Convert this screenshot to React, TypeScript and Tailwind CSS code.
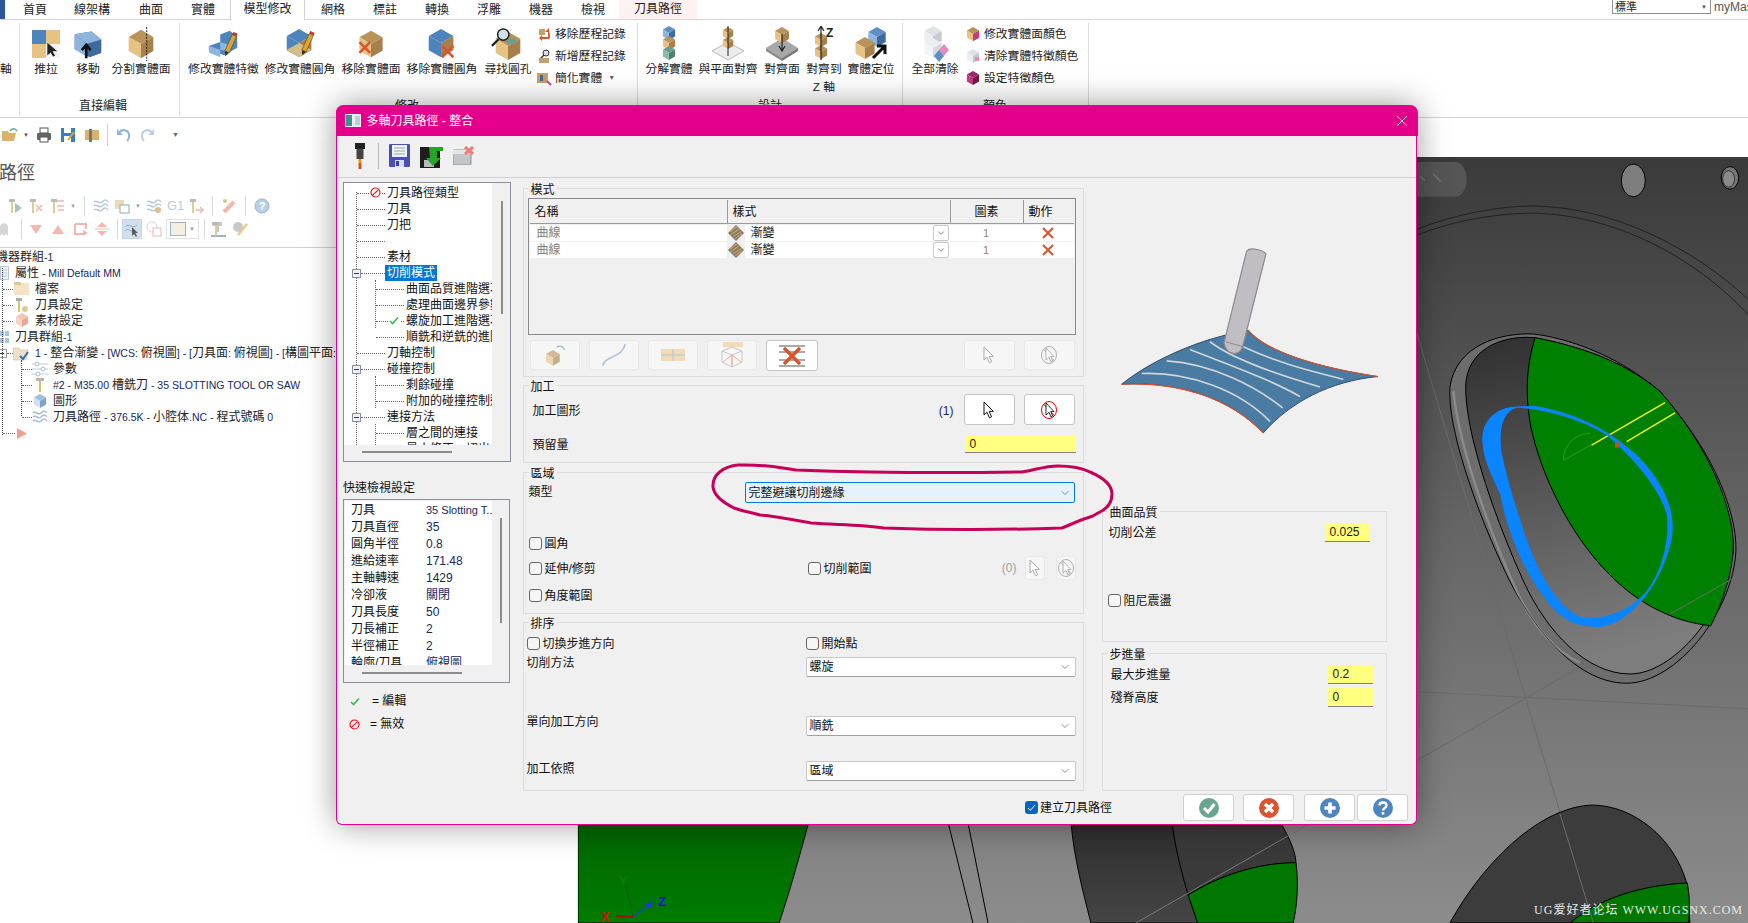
import { ChevronDown } from 'lucide-react';
import type { ReactNode } from 'react';

// small isometric cube used by most of the ribbon icons
function Cube({ x, y, s, t = '#b8935a', l = '#e4c385', r = '#a67f4a' }: { x: number; y: number; s: number; t?: string; l?: string; r?: string }) {
  const w = s * 0.87;
  const h = s / 2;
  return (
    <g>
      <polygon points={`${x},${y - s} ${x + w},${y - h} ${x},${y} ${x - w},${y - h}`} fill={t} />
      <polygon points={`${x - w},${y - h} ${x},${y} ${x},${y + s} ${x - w},${y + h}`} fill={l} />
      <polygon points={`${x + w},${y - h} ${x},${y} ${x},${y + s} ${x + w},${y + h}`} fill={r} />
    </g>
  );
}

const BLUE = { t: '#5d8fc4', l: '#8fb5de', r: '#3e6a9e' };
const TEAL = { t: '#6d9f8d', l: '#8dbaa8', r: '#4f8170' };

function Pencil({ x = 24, y = 14 }: { x?: number; y?: number }) {
  return (
    <g transform={`translate(${x} ${y}) rotate(24)`}>
      <rect x="-2.5" y="0" width="5" height="19" fill="#d9a52e" stroke="#5a4a20" strokeWidth="0.6" />
      <rect x="-2.5" y="-3" width="5" height="3" fill="#c0392b" />
      <polygon points="-2.5,19 2.5,19 0,24" fill="#333" />
    </g>
  );
}

function RedX({ x, y, s = 6 }: { x: number; y: number; s?: number }) {
  return <path d={`M${x - s} ${y - s}L${x + s} ${y + s}M${x + s} ${y - s}L${x - s} ${y + s}`} stroke="#d9532c" strokeWidth="2.8" />;
}

function Ic({ size = 36, children }: { size?: number; children: ReactNode }) {
  return (
    <svg width={size} height={size} viewBox="0 0 36 36" className="shrink-0">
      {children}
    </svg>
  );
}

const Cursor = ({ c = '#111', f = '#fff' }: { c?: string; f?: string }) => (
  <svg width="12" height="18" viewBox="0 0 12 18">
    <path d="M1 1V14L4 11.2L6.4 16.8L8.6 15.8L6.2 10.4H10.4Z" fill={f} stroke={c} strokeWidth="1" />
  </svg>
);

const NoCursor = ({ c = '#111', ring = '#e00' }: { c?: string; ring?: string }) => (
  <svg width="18" height="20" viewBox="0 0 18 20">
    <ellipse cx="9" cy="10" rx="7.5" ry="8.5" fill="none" stroke={ring} strokeWidth="1" />
    <path d="M3.5 4L14.5 16" stroke={ring} strokeWidth="1" />
    <path d="M6 3V15L9 12.4L11 17L12.6 16L10.8 11.6H14Z" fill="#fff" stroke={c} strokeWidth="0.9" />
  </svg>
);

function Ribbon({ w, label, icon }: { w: string; label: string; icon: ReactNode }) {
  return (
    <div className={`${w} flex flex-col items-center`}>
      <div className="h-[32px] flex items-center justify-center">{icon}</div>
      <span className="whitespace-nowrap text-[11.8px] mt-px">{label}</span>
    </div>
  );
}

function SmallItem({ icon, text, arrow }: { icon: ReactNode; text: string; arrow?: boolean }) {
  return (
    <div className="flex items-center h-[22px] gap-[2px] whitespace-nowrap">
      <span className="w-[18px] flex justify-center">{icon}</span>
      <span className="text-[11.8px]">{text}</span>
      {arrow && <span className="ml-1 text-[7px] text-[#666]">▼</span>}
    </div>
  );
}

function Tile({ className = '', children }: { className?: string; children: ReactNode }) {
  return (
    <svg width="16" height="16" viewBox="0 0 16 16" className={`shrink-0 ${className}`}>
      {children}
    </svg>
  );
}

function Sep({ className = '' }: { className?: string }) {
  return <span className={`w-px h-[20px] bg-[#cfcfcf] mx-[3px] shrink-0 ${className}`} />;
}

function Tool({ color = '#d8c27a' }: { color?: string }) {
  return (
    <g>
      <rect x="2" y="1" width="6" height="3" fill="#aaa" />
      <rect x="4" y="4" width="2" height="11" fill={color} />
    </g>
  );
}

function Waves() {
  return <path d="M1 4C4 1 6 7 9 4S14 2 15 4M1 8C4 5 6 11 9 8S14 6 15 8M1 12C4 9 6 15 9 12S14 10 15 12" fill="none" stroke="#a9bdd2" strokeWidth="1.5" />;
}

function Check() {
  return (
    <svg width="10" height="9" viewBox="0 0 10 9">
      <path d="M1 5L3.6 7.6L9 1.4" fill="none" stroke="#3cb44a" strokeWidth="1.5" />
    </svg>
  );
}

function Invalid() {
  return (
    <svg width="11" height="11" viewBox="0 0 11 11" className="block">
      <circle cx="5.5" cy="5.5" r="4.5" fill="none" stroke="#e8141a" strokeWidth="1.2" />
      <path d="M2.4 8.4L8.6 2.6" stroke="#e8141a" strokeWidth="1.2" />
    </svg>
  );
}

function PlusBox() {
  return (
    <span className="w-[9px] h-[9px] border border-[#8a8f9a] bg-[#eef0f3] flex items-center justify-center shrink-0">
      <span className="w-[5px] h-px bg-[#2b3f73]" />
    </span>
  );
}

function Dots({ w }: { w: string }) {
  return <span className={`${w} border-t border-dotted border-[#666] shrink-0`} />;
}

// latin runs in the tree are set smaller than the CJK around them
function L({ children }: { children: ReactNode }) {
  return <span className="text-[10.5px] text-[#14285c]">{children}</span>;
}

function Group({ title, className, children }: { title: string; className: string; children: ReactNode }) {
  return (
    <div className={`relative border border-[#dcdcdc] ${className}`}>
      <span className="absolute -top-[7px] left-[5px] bg-[#f0f0f0] px-[2px] leading-4">{title}</span>
      {children}
    </div>
  );
}

function Box({ label, className = '' }: { label: string; className?: string }) {
  return (
    <label className={`flex items-center gap-[3px] whitespace-nowrap h-5 ${className}`}>
      <span className="w-[13px] h-[13px] rounded-[3px] border border-[#666] bg-[#f5f5f5] shrink-0" />
      <span className="pt-px">{label}</span>
    </label>
  );
}

function Sel({ text, className = '' }: { text: string; className?: string }) {
  return (
    <div className={`h-5 flex items-center justify-between pl-[3px] pr-[4px] bg-white border border-[#c8c8c8] border-b-[#a0a0a0] rounded-[2px] ${className}`}>
      <span>{text}</span>
      <ChevronDown size={12} strokeWidth={1.2} className="text-[#444]" />
    </div>
  );
}

function Yellow({ value, className }: { value: string; className: string }) {
  return <div className={`bg-[#ffff80] border-b border-[#808080] flex items-center pl-[5px] text-[#1a1a1a] ${className}`}>{value}</div>;
}

function PickBtn({ on, w = 'w-[51px] h-[31px]', children }: { on?: boolean; w?: string; children: ReactNode }) {
  return (
    <div className={`${w} flex items-center justify-center rounded-[3px] border ${on ? 'bg-white border-[#c4c4c4]' : 'bg-[#f6f6f6] border-[#e8e8e8]'}`}>
      {children}
    </div>
  );
}

function Round({ color, w, children }: { color: string; w: string; children: ReactNode }) {
  return (
    <div className={`${w} h-[27px] bg-white border border-[#cfcfcf] rounded-[3px] flex items-center justify-center`}>
      <svg width="20" height="20" viewBox="0 0 20 20">
        <circle cx="10" cy="10" r="10" fill={color} />
        {children}
      </svg>
    </div>
  );
}

function PatternRow() {
  return (
    <div className="grid grid-cols-[197px_223px_73px_50px] h-4 bg-white mb-px">
      <span className="pl-[7px] text-[#7d7d7d] leading-4">曲線</span>
      <div className="flex items-center">
        <svg width="18" height="16" viewBox="0 0 18 16" className="bg-[#efefef] shrink-0">
          <polygon points="9,0 17,8 9,16 1,8" fill="#7d7d7d" />
          <path d="M3 7C7 4 8 3 10 2M4 9.5C8 7 10 5 12 4M6 11.5C10 10 12 8 14 6.5M8 13.5C11 12 13 10 15 8.5" fill="none" stroke="#dba13f" strokeWidth="1.1" />
        </svg>
        <span className="ml-[6px] flex-1">漸變</span>
        <span className="w-[16px] h-4 border border-[#c8c8c8] rounded-[2px] flex items-center justify-center mr-px">
          <ChevronDown size={10} strokeWidth={1.2} />
        </span>
      </div>
      <span className="text-center text-[#a08060] text-[11px] leading-4">1</span>
      <svg width="50" height="16" viewBox="0 0 50 16">
        <path d="M20 3L30 13M30 3L20 13" stroke="#d9532c" strokeWidth="2" />
      </svg>
    </div>
  );
}

const TREE = [
  { lv: 1, t: '刀具路徑類型', icon: 'no' },
  { lv: 1, t: '刀具' },
  { lv: 1, t: '刀把' },
  { lv: 1, t: '' },
  { lv: 1, t: '素材' },
  { lv: 1, t: '切削模式', box: true, sel: true },
  { lv: 2, t: '曲面品質進階選項' },
  { lv: 2, t: '處理曲面邊界參數' },
  { lv: 2, t: '螺旋加工進階選項', icon: 'ok' },
  { lv: 2, t: '順銑和逆銑的進階' },
  { lv: 1, t: '刀軸控制' },
  { lv: 1, t: '碰撞控制', box: true },
  { lv: 2, t: '剩餘碰撞' },
  { lv: 2, t: '附加的碰撞控制選' },
  { lv: 1, t: '連接方法', box: true },
  { lv: 2, t: '層之間的連接' },
  { lv: 2, t: '最小修正一切出' },
];

const QUICK = [
  ['刀具直徑', '35'],
  ['圓角半徑', '0.8'],
  ['進給速率', '171.48'],
  ['主軸轉速', '1429'],
  ['冷卻液', '關閉'],
  ['刀具長度', '50'],
  ['刀長補正', '2'],
  ['半徑補正', '2'],
  ['輪廓/刀具', '俯視圖'],
];

function MultiAxisDialog() {
  return (
    <div className="absolute left-[336px] top-[105px] w-[1081px] h-[720px] bg-[#f0f0f0] border-[1.5px] border-t-0 border-[#e4008a] rounded-t-lg rounded-b-md shadow-[0_0_32px_rgba(0,0,0,0.4)] text-[#111]">
      <div className="h-[31px] bg-[#e4008a] rounded-t-lg flex items-center text-white pl-[9px] -mx-[1.5px]">
        <svg width="16" height="13" viewBox="0 0 16 13" className="mr-[6px]">
          <rect width="16" height="13" fill="#e8eef0" />
          <rect x="1" y="1" width="6" height="11" fill="#3f8f8a" />
          <rect x="10" y="2" width="5" height="9" fill="#bcd" />
        </svg>
        <span>多軸刀具路徑 - 整合</span>
        <svg width="12" height="12" viewBox="0 0 12 12" className="ml-auto mr-[10px]">
          <path d="M1 1L11 11M11 1L1 11" stroke="#fff" strokeWidth="1" />
        </svg>
      </div>

      <div className="h-[42px] pb-[2px] border-b border-[#d0d0d0] flex items-center pl-[17px]">
        <svg width="12" height="26" viewBox="0 0 12 26">
          <rect x="1" y="0" width="10" height="6" fill="#222" />
          <rect x="2.5" y="6" width="7" height="10" fill="#444" />
          <rect x="4.5" y="16" width="3" height="4" fill="#e89a1c" />
          <rect x="4.5" y="20" width="3" height="6" fill="#d9531a" />
        </svg>
        <span className="w-px h-[26px] bg-[#b8b8b8] ml-[12px]" />
        <svg width="21" height="23" viewBox="0 0 21 23" className="ml-[10px]">
          <rect width="21" height="23" rx="1" fill="#4a4fb5" />
          <rect x="3" y="1" width="15" height="12" fill="#f0f2f8" />
          <path d="M5 4H16M5 7H16M5 10H16" stroke="#9aa" strokeWidth="1" />
          <rect x="6" y="16" width="9" height="7" fill="#d8dcf0" />
          <rect x="7" y="17" width="3" height="5" fill="#3a3f9a" />
        </svg>
        <svg width="23" height="24" viewBox="0 0 23 24" className="ml-[10px]">
          <rect y="3" width="20" height="21" fill="#1d1d1d" />
          <rect x="4" y="16" width="10" height="7" fill="#bbb" />
          <path d="M9 3H23V7H17V14H21L13 22L6 14H10Z" fill="#2aa32a" />
        </svg>
        <svg width="21" height="19" viewBox="0 0 21 19" className="ml-[10px]">
          <rect y="4" width="18" height="15" rx="1" fill="#c3c6c9" stroke="#8f8f8f" />
          <rect y="4" width="18" height="4" fill="#e6e6e6" />
          <path d="M12 1L20 8M20 1L12 8" stroke="#ef7b7b" strokeWidth="3" />
        </svg>
      </div>

      <div className="flex">
        {/* left column */}
        <div className="w-[174px] pl-[6px] shrink-0">
          <div className="relative mt-[4px] w-[168px] h-[280px] bg-white border border-[#8a8f9a] overflow-hidden">
            <span className="absolute left-[12px] top-[9px] h-[255px] border-l border-dotted border-[#666]" />
            <span className="absolute left-[31px] top-[97px] h-[48px] border-l border-dotted border-[#666]" />
            <span className="absolute left-[31px] top-[193px] h-[32px] border-l border-dotted border-[#666]" />
            <span className="absolute left-[31px] top-[241px] h-[25px] border-l border-dotted border-[#666]" />
            <div className="w-[149px] h-[263px] pt-[2px] overflow-hidden">
              {TREE.map((r, i) => (
                <div key={i} className="relative h-4 flex items-center whitespace-nowrap">
                  {r.lv === 1 ? (
                    r.box ? (
                      <span className="pl-[8px] flex items-center">
                        <PlusBox />
                        <Dots w="w-[24px]" />
                      </span>
                    ) : (
                      <span className="pl-[13px] flex items-center">
                        <Dots w="w-[28px]" />
                      </span>
                    )
                  ) : (
                    <span className="pl-[32px] flex items-center">
                      <Dots w="w-[28px]" />
                    </span>
                  )}
                  {r.icon === 'no' && (
                    <span className="absolute left-[25px] top-[2px] bg-white px-px">
                      <Invalid />
                    </span>
                  )}
                  {r.icon === 'ok' && (
                    <span className="absolute left-[44px] top-[3px] bg-white pl-[1px] pr-[2px]">
                      <Check />
                    </span>
                  )}
                  <span className={r.sel ? 'bg-[#0078d7] text-white px-[2px] h-4 leading-4' : 'pl-[2px] leading-4'}>{r.t}</span>
                </div>
              ))}
            </div>
            <span className="absolute right-0 top-0 bottom-0 w-[18px] bg-[#f0f0f0]" />
            <span className="absolute bottom-0 left-0 right-0 h-[16px] bg-[#f0f0f0]" />
            <span className="absolute left-[157px] top-[18px] h-[113px] w-[2px] bg-[#8c8c8c]" />
            <span className="absolute left-[18px] bottom-[8px] w-[90px] h-[2px] bg-[#8c8c8c]" />
          </div>

          <div className="mt-[18px] h-4 leading-4">快速檢視設定</div>
          <div className="relative mt-[3px] w-[167px] h-[184px] bg-[#f0f0f0] border border-[#8a8f9a] overflow-hidden">
            <div className="ml-px mt-px w-[147px] h-[164px] bg-white overflow-hidden">
              <div className="flex h-[17px] items-center whitespace-nowrap">
                <span className="w-[81px] pl-[6px] shrink-0">刀具</span>
                <span className="text-[#14285c] text-[11px]">35 Slotting T..</span>
              </div>
              {QUICK.map(([k, v]) => (
                <div key={k} className="flex h-[17px] items-center whitespace-nowrap">
                  <span className="w-[81px] pl-[6px] shrink-0">{k}</span>
                  <span className="text-[#14285c]">{v}</span>
                </div>
              ))}
            </div>
            <span className="absolute left-[156px] top-[18px] h-[105px] w-[2px] bg-[#8c8c8c]" />
            <span className="absolute left-[18px] bottom-[8px] w-[100px] h-[2px] bg-[#8c8c8c]" />
          </div>
          <div className="mt-[10px] pl-[7px] flex items-center gap-[12px] h-4">
            <Check />
            <span>= 編輯</span>
          </div>
          <div className="mt-[7px] pl-[6px] flex items-center gap-[10px] h-4">
            <Invalid />
            <span>= 無效</span>
          </div>
        </div>

        {/* middle + right */}
        <div className="flex-1 pl-[11.5px]">
          <div className="flex">
            <div className="w-[561px] shrink-0 pt-[10px]">
              <Group title="模式" className="h-[189px] pt-[9px]">
                <div className="ml-[4px] w-[548px] h-[137px] border border-[#8a8a8a] p-px">
                  <div className="grid grid-cols-[197px_223px_73px_50px] h-[24px] border-b border-[#9a9a9a] mb-px">
                    <span className="pl-[5px] leading-[24px]">名稱</span>
                    <span className="pl-[5px] leading-[24px] border-l border-[#9a9a9a]">樣式</span>
                    <span className="text-center leading-[24px] border-l border-[#9a9a9a]">圖素</span>
                    <span className="pl-[5px] leading-[24px] border-l border-[#9a9a9a]">動作</span>
                  </div>
                  <PatternRow />
                  <PatternRow />
                </div>
                <div className="flex mt-[5px] pl-[6px] pr-[8px]">
                  <div className="flex gap-[9px]">
                    <PickBtn w="w-[50px] h-[30px]">
                      <svg width="26" height="24" viewBox="0 0 36 32" opacity="0.6">
                        <Cube x={15} y={20} s={11} />
                        <path d="M20 5C26 2 30 5 31 9" fill="none" stroke="#6d9f8d" strokeWidth="2" />
                      </svg>
                    </PickBtn>
                    <PickBtn w="w-[50px] h-[30px]">
                      <svg width="26" height="26" viewBox="0 0 26 26">
                        <path d="M2 24C2 14 22 16 24 2" fill="none" stroke="#a9c4de" strokeWidth="1.6" />
                      </svg>
                    </PickBtn>
                    <PickBtn w="w-[50px] h-[30px]">
                      <svg width="24" height="14" viewBox="0 0 24 14">
                        <rect width="24" height="12" y="1" fill="#f3dcb4" />
                        <path d="M0 7H24M12 1V13" stroke="#a9c4de" strokeWidth="1" />
                      </svg>
                    </PickBtn>
                    <PickBtn w="w-[50px] h-[30px]">
                      <svg width="24" height="26" viewBox="0 0 24 26">
                        <rect x="3" y="0" width="20" height="5" fill="#f3dcb4" />
                        <path d="M2 9L12 5L22 9L22 20L12 25L2 20ZM2 9L12 13L22 9M12 13V25" fill="none" stroke="#c8c8c8" strokeWidth="1" />
                        <path d="M12 13L12 24M12 13L3 20M12 13L21 20" stroke="#f0a79a" strokeWidth="1" />
                      </svg>
                    </PickBtn>
                    <PickBtn on w="w-[52px] h-[31px]">
                      <svg width="26" height="24" viewBox="0 0 26 24">
                        <path d="M0 2H26M0 8H26M0 16H26M0 22H26" stroke="#555" strokeWidth="1" />
                        <path d="M5 4L21 20M21 4L5 20" stroke="#d9532c" strokeWidth="3.4" />
                      </svg>
                    </PickBtn>
                  </div>
                  <div className="ml-auto flex gap-[9px]">
                    <PickBtn w="w-[51px] h-[30px]">
                      <Cursor c="#a8a8a8" />
                    </PickBtn>
                    <PickBtn w="w-[51px] h-[30px]">
                      <NoCursor c="#a8a8a8" ring="#b0b0b0" />
                    </PickBtn>
                  </div>
                </div>
              </Group>

              <Group title="加工" className="h-[78px] mt-[8px] pt-[8px]">
                <div className="flex items-center h-[31px] pl-[9px] pr-[8px]">
                  <span className="pt-[3px]">加工圖形</span>
                  <span className="ml-auto mr-[10px] pt-[3px] text-[#14285c]">(1)</span>
                  <div className="flex gap-[9px]">
                    <PickBtn on>
                      <Cursor />
                    </PickBtn>
                    <PickBtn on>
                      <NoCursor />
                    </PickBtn>
                  </div>
                </div>
                <div className="flex items-center mt-[10px] h-[18px] pl-[9px] pr-[7px]">
                  <span className="pt-px">預留量</span>
                  <Yellow value="0" className="ml-auto w-[111px] h-[18px]" />
                </div>
              </Group>

              <Group title="區域" className="h-[142px] mt-[9px] pt-[9px]">
                <div className="flex h-[21px]">
                  <span className="w-[221px] pl-[5px] leading-5">類型</span>
                  <div className="w-[330px] h-[21px] flex items-center justify-between pl-[3px] pr-[3px] bg-[#e5f1fb] border border-[#0078d7] rounded-[2px]">
                    <span>完整避讓切削邊緣</span>
                    <ChevronDown size={12} strokeWidth={1.2} className="text-[#444]" />
                  </div>
                </div>
                <Box label="圓角" className="mt-[30px] pl-[5px]" />
                <div className="flex items-center mt-[5px] h-5">
                  <Box label="延伸/修剪" className="w-[284px] pl-[5px]" />
                  <Box label="切削範圍" />
                  <span className="ml-auto text-[#a0a0a0] mr-[8px]">(0)</span>
                  <div className="flex gap-[11px] pr-[7px]">
                    <PickBtn w="w-[20px] h-[24px]">
                      <Cursor c="#a8a8a8" />
                    </PickBtn>
                    <PickBtn w="w-[20px] h-[24px]">
                      <NoCursor c="#a8a8a8" ring="#b0b0b0" />
                    </PickBtn>
                  </div>
                </div>
                <Box label="角度範圍" className="mt-[7px] pl-[5px]" />
              </Group>

              <Group title="排序" className="h-[169px] mt-[8px] pt-[10px]">
                <div className="flex">
                  <Box label="切換步進方向" className="w-[282px] pl-[3px]" />
                  <Box label="開始點" />
                </div>
                <div className="flex mt-[4px]">
                  <span className="w-[282px] pl-[3px] -mt-[2px] leading-4">切削方法</span>
                  <Sel text="螺旋" className="w-[270px]" />
                </div>
                <div className="flex mt-[39px]">
                  <span className="w-[282px] pl-[3px] -mt-[2px] leading-4">單向加工方向</span>
                  <Sel text="順銑" className="w-[270px]" />
                </div>
                <div className="flex mt-[25px]">
                  <span className="w-[282px] pl-[3px] leading-4">加工依照</span>
                  <Sel text="區域" className="w-[270px]" />
                </div>
              </Group>
            </div>

            <div className="w-[285px] ml-[18px] shrink-0">
              <svg width="285" height="333" viewBox="1102 178 285 333" className="block">
                <g transform="translate(1080 230) scale(0.3333 0.3827)" fill="none" strokeWidth="2">
                  <path d="M125 403C200 350 320 300 435 275L505 262C560 320 720 360 893 383C750 395 630 450 550 530C450 440 300 395 125 403Z" fill="#4a7ca3" stroke="#2f4a6b" vectorEffect="non-scaling-stroke" strokeWidth="1" />
                  <path d="M125 403C300 395 450 440 550 530M505 262C560 320 720 360 893 383" stroke="#d9502e" vectorEffect="non-scaling-stroke" strokeWidth="1.2" />
                  <path d="M185 375C330 370 480 420 570 500M260 342C400 350 530 410 608 465M330 312C440 350 570 390 660 435M390 292C470 345 620 385 720 410M490 305C600 350 700 370 790 390" stroke="#cfd5d8" vectorEffect="non-scaling-stroke" strokeWidth="1.6" />
                  <path d="M500 55C510 45 545 50 558 62L488 305C480 330 440 330 432 295Z" fill="#c0bec2" stroke="#8a8a8a" vectorEffect="non-scaling-stroke" strokeWidth="1.2" />
                  <path d="M438 292L488 305" stroke="#8a8a8a" vectorEffect="non-scaling-stroke" strokeWidth="1" />
                </g>
              </svg>
              <Group title="曲面品質" className="h-[131px] pt-[11px]">
                <div className="flex items-center h-[19px] pl-[6px] pr-[16px]">
                  <span>切削公差</span>
                  <Yellow value="0.025" className="ml-auto w-[45px] h-[19px]" />
                </div>
                <Box label="阻尼震盪" className="mt-[48px] pl-[5px]" />
              </Group>
              <Group title="步進量" className="h-[138px] mt-[11px] pt-[11px]">
                <div className="flex items-center h-[19px] pl-[8px] pr-[13px]">
                  <span>最大步進量</span>
                  <Yellow value="0.2" className="ml-auto w-[45px] h-[19px]" />
                </div>
                <div className="flex items-center h-[19px] mt-[4px] pl-[8px] pr-[13px]">
                  <span>殘脊高度</span>
                  <Yellow value="0" className="ml-auto w-[45px] h-[19px]" />
                </div>
              </Group>
            </div>
          </div>

          <div className="flex items-center justify-end mt-[3px] pr-[8px]">
            <span className="w-[13px] h-[13px] rounded-[3px] bg-[#0a63c2] flex items-center justify-center mr-[2px]">
              <svg width="9" height="8" viewBox="0 0 9 8">
                <path d="M1 4L3.4 6.4L8 1" fill="none" stroke="#fff" strokeWidth="1" />
              </svg>
            </span>
            <span className="mr-[71px] whitespace-nowrap">建立刀具路徑</span>
            <Round color="#6ba592" w="w-[51px]">
              <path d="M5 10L9 14L15.5 6" fill="none" stroke="#fff" strokeWidth="3" />
            </Round>
            <span className="w-[9px]" />
            <Round color="#d9552f" w="w-[51px]">
              <path d="M6 6L14 14M14 6L6 14" stroke="#fff" strokeWidth="3.4" />
            </Round>
            <span className="w-[10px]" />
            <Round color="#4f86bf" w="w-[51px]">
              <path d="M10 4.5V15.5M4.5 10H15.5" stroke="#fff" strokeWidth="3.6" />
            </Round>
            <span className="w-[2px]" />
            <Round color="#4f86bf" w="w-[51px]">
              <path d="M6.5 7.5C6.5 3.5 13.5 3.5 13.5 7.5C13.5 10 10 10 10 12.5" fill="none" stroke="#fff" strokeWidth="2.4" />
              <rect x="8.7" y="14" width="2.6" height="2.6" fill="#fff" />
            </Round>
          </div>
        </div>
      </div>
    </div>
  );
}

function Viewport() {
  const ns = { vectorEffect: 'non-scaling-stroke' as const };
  return (
    <div className="relative h-[766px] bg-gradient-to-b from-[#3a3a3a] via-[#666666] to-[#8c8c8c] overflow-hidden">
      <svg width="1170" height="766" viewBox="578 157 1170 766" className="absolute inset-0">
        <defs>
          <linearGradient id="hole" x1="0" y1="0" x2="0.2" y2="1">
            <stop offset="0" stopColor="#2f2f2f" />
            <stop offset="0.55" stopColor="#5b5b5b" />
            <stop offset="1" stopColor="#7d7d7d" />
          </linearGradient>
          <linearGradient id="band" x1="0" y1="0" x2="0" y2="1">
            <stop offset="0" stopColor="#2e2e2e" />
            <stop offset="1" stopColor="#454545" />
          </linearGradient>
          <linearGradient id="lowgreen" x1="0" y1="0" x2="0" y2="1">
            <stop offset="0" stopColor="#005c00" />
            <stop offset="1" stopColor="#007c00" />
          </linearGradient>
        </defs>

        {/* lower band seen under the dialog */}
        <g transform="translate(560 780) scale(0.5618 0.3333)" fill="none" stroke="#000" strokeWidth="1">
          <path d="M32 0H462C440 150 410 330 390 429H32Z" fill="url(#lowgreen)" {...ns} />
          <path d="M692 135L735 429M727 135L762 429" {...ns} />
          <path d="M910 135H1090C1100 250 1120 350 1135 429H945C930 330 915 230 910 135Z" fill="url(#band)" {...ns} />
          <path d="M1090 135H1285C1300 180 1310 220 1310 250C1240 248 1170 290 1118 345C1105 270 1095 200 1090 135Z" fill="#3a3a3a" {...ns} />
          <path d="M1118 345C1170 290 1240 248 1310 248C1315 310 1312 380 1305 429H1135Z" fill="#007800" {...ns} />
          <path d="M1330 135L1025 429" stroke="#7a7a7a" {...ns} />
        </g>

        {/* hole and tool path, right of the dialog */}
        <g transform="translate(1400 120) scale(0.3333 0.512)" fill="none" stroke="#000" strokeWidth="1">
          <rect x="-40" y="82" width="240" height="68" rx="34" fill="#555" stroke="none" />
          <path d="M60 110L75 118M100 105L122 120" stroke="#6e6e6e" strokeWidth="2" {...ns} />
          <ellipse cx="700" cy="118" rx="36" ry="32" fill="#7e7e7e" {...ns} />
          <ellipse cx="990" cy="113" rx="26" ry="22" fill="#777" {...ns} />
          <ellipse cx="986" cy="115" rx="18" ry="16" fill="#8a8a8a" stroke="#333" {...ns} />

          <path d="M0 228C120 190 280 168 400 168C640 170 880 250 1044 350" stroke="#222" {...ns} />
          <path d="M0 240C120 200 280 182 400 182C640 185 880 265 1044 380" stroke="#222" {...ns} />
          <path d="M50 415L375 1125L580 1568M0 1115L1044 1150M0 1270L1044 880" stroke="#6b6b6b" {...ns} />

          <path d="M400 418C300 415 170 440 150 520C140 600 230 760 300 860C380 980 520 1100 680 1100C830 1100 1000 960 1008 840C1010 760 930 630 760 520C650 460 500 425 400 418Z" fill="#6d6d6d" {...ns} />
          <path d="M160 530C180 650 280 820 350 920C400 990 470 1040 540 1060" stroke="#c4c4c4" strokeWidth="2.4" opacity="0.35" {...ns} />
          <path d="M400 425C300 420 200 450 197 520C195 620 300 800 370 900C440 1000 560 1082 690 1082C820 1082 980 960 1000 840C1000 760 930 640 780 530C660 465 520 440 400 425Z" fill="url(#hole)" {...ns} />
          <path d="M405 425C380 480 375 530 390 590C420 700 560 900 800 965C850 980 900 985 932 988C970 940 1000 880 1000 830C1000 760 930 640 780 530C660 465 520 440 405 425Z" fill="#008000" {...ns} />
          <path d="M810 965L1000 895" stroke="#6b6b6b" {...ns} />
          <path d="M490 665C490 640 520 612 570 612M490 665L580 632" stroke="#22a022" {...ns} />
          <path d="M575 635L795 552M680 628L825 572" stroke="#f2f21e" strokeWidth="1.4" {...ns} />
          <path
            d="M340 560C300 562 250 580 247 620C245 660 280 700 300 730C320 800 370 880 430 930C490 985 540 990 600 990C680 985 780 920 815 820C830 760 790 710 720 660C640 610 530 570 400 558ZM350 562C310 570 295 600 305 650C320 700 345 750 370 800C410 880 470 950 540 970C600 980 690 960 740 920C790 880 810 810 800 770C780 720 700 660 620 615C540 585 440 565 350 562Z"
            fill="#0a84ff"
            fillRule="evenodd"
            stroke="none"
          />
          <path d="M645 630H658V640H645Z" fill="#b25a1a" stroke="none" />

          <path d="M150 1568C250 1450 420 1340 580 1338C700 1340 820 1400 860 1490L870 1568Z" fill="#3c3c3c" {...ns} />
          <path d="M510 1568C600 1520 720 1495 862 1490C870 1520 870 1550 865 1568Z" fill="#007800" {...ns} />
          <path d="M480 1355L580 1568" stroke="#6b6b6b" {...ns} />
        </g>

        {/* axis triad */}
        <path d="M633 917L626 886" stroke="#0b5e0b" strokeWidth="1" />
        <path d="M633 917L650 904" stroke="#1c3fd0" strokeWidth="1.4" />
        <polygon points="654,901 645,904 650,909" fill="#1c3fd0" />
        <path d="M633 917L616 916" stroke="#a01010" strokeWidth="2" />
        <text x="619" y="885" fill="#0b7a0b" fontSize="13" fontWeight="700" fontFamily="Liberation Sans, sans-serif">Y</text>
        <text x="658" y="906" fill="#1414e0" fontSize="13" fontWeight="700" fontFamily="Liberation Sans, sans-serif">Z</text>
        <text x="601" y="921" fill="#d01010" fontSize="13" fontWeight="700" fontFamily="Liberation Sans, sans-serif">X</text>
      </svg>
      <span className="absolute right-[5px] bottom-[5px] font-['Liberation_Serif','Noto_Sans_CJK_SC',serif] text-[12px] leading-4 tracking-[1px] text-[#e8e8e8] whitespace-nowrap">
        UG爱好者论坛 WWW.UGSNX.COM
      </span>
    </div>
  );
}

export default function App() {
  return (
    <div className="relative w-[1748px] h-[923px] overflow-hidden bg-white text-[12px] leading-4 text-[#222] font-['Liberation_Sans','Noto_Sans_CJK_TC',sans-serif]">
      {/* tabs */}
      <div className="flex h-[20px] border-b border-[#d4d4d4] items-center">
        <span className="w-[5px] h-full bg-[#2b579a]" />
        <span className="w-[60px] text-center">首頁</span>
        <span className="w-[54px] text-center">線架構</span>
        <span className="w-[64px] text-center">曲面</span>
        <span className="w-[40px] text-center">實體</span>
        <span className="w-[7px]" />
        <span className="w-[75px] h-[20px] text-center bg-white border-x border-[#d4d4d4] leading-[18px]">模型修改</span>
        <span className="w-[2px]" />
        <span className="w-[52px] text-center">網格</span>
        <span className="w-[52px] text-center">標註</span>
        <span className="w-[52px] text-center">轉換</span>
        <span className="w-[52px] text-center">浮雕</span>
        <span className="w-[52px] text-center">機器</span>
        <span className="w-[52px] text-center">檢視</span>
        <span className="w-[78px] h-full text-center bg-[#fdf1f1] leading-[18px]">刀具路徑</span>
        <div className="ml-auto flex items-center self-start h-[14px]">
          <div className="w-[99px] h-[14px] border border-[#8f8f8f] border-t-0 flex items-center justify-between pl-[2px] pr-[3px] text-[11px]">
            <span>標準</span>
            <span className="text-[6px] text-[#555]">▼</span>
          </div>
          <span className="ml-[3px] w-[34px] overflow-hidden text-[#555] whitespace-nowrap">myMastercam</span>
        </div>
      </div>

      {/* ribbon */}
      <div className="flex h-[98px] border-b border-[#d4d4d4] pt-[3px]">
        <div className="w-[20px] h-[92px] border-r border-[#dcdcdc] pt-[38px] overflow-hidden">
          <span className="text-[11.8px]">軸</span>
        </div>

        <div className="w-[160px] h-[92px] border-r border-[#dcdcdc] flex flex-col">
          <div className="flex pl-[6px] pt-[5px]">
            <Ribbon
              w="w-[40px]"
              label="推拉"
              icon={
                <svg width="28" height="28" viewBox="0 0 28 28">
                  <rect width="14" height="14" fill="#4d84bd" />
                  <rect x="14" width="14" height="14" fill="#e6c283" />
                  <rect y="14" width="14" height="14" fill="#e6c283" />
                  <rect x="14" y="14" width="14" height="14" fill="#f4f4f4" />
                  <path d="M15 12V26L18.5 23L21 27L23.5 25.6L21 21.6H26Z" fill="#222" stroke="#fff" strokeWidth="0.6" />
                </svg>
              }
            />
            <Ribbon
              w="w-[44px]"
              label="移動"
              icon={
                <Ic size={32}>
                  <polygon points="3,7 22,4 33,13 33,28 20,33 3,24" fill="#3e6a9e" />
                  <polygon points="3,7 22,4 33,13 16,18" fill="#8fb5de" />
                  <polygon points="3,7 16,18 16,32 3,24" fill="#8fb5de" />
                  <path d="M16 34V21M11 25L16 19L21 25" fill="none" stroke="#111" strokeWidth="3" />
                </Ic>
              }
            />
            <Ribbon
              w="w-[62px]"
              label="分割實體面"
              icon={
                <Ic size={34}>
                  <Cube x={18} y={18} s={15} />
                  <path d="M24 0V36" stroke="#111" strokeWidth="1" strokeDasharray="2 1.5" />
                </Ic>
              }
            />
          </div>
          <div className="mt-auto pl-[59px] pb-[1px]">直接編輯</div>
        </div>

        <div className="w-[458px] h-[92px] border-r border-[#dcdcdc] flex flex-col">
          <div className="flex pl-[7px] pt-[5px]">
            <Ribbon
              w="w-[73px]"
              label="修改實體特徵"
              icon={
                <Ic size={34}>
                  <polygon points="2,20 14,16 14,8 24,4 32,10 32,22 18,30 2,24" fill="#4d84bd" />
                  <polygon points="2,20 14,24 14,32 2,27" fill="#8fb5de" />
                  <polygon points="14,16 24,19 24,26 14,24" fill="#8fb5de" />
                  <Pencil x={29} y={9} />
                </Ic>
              }
            />
            <Ribbon
              w="w-[80px]"
              label="修改實體圓角"
              icon={
                <Ic size={34}>
                  <Cube x={17} y={17} s={15} t="#4d84bd" l="#4d84bd" />
                  <polygon points="4,24 17,32 30,24 17,17" fill="#e6c283" opacity="0.9" />
                  <Pencil x={30} y={8} />
                </Ic>
              }
            />
            <Ribbon
              w="w-[62px]"
              label="移除實體面"
              icon={
                <Ic size={32}>
                  <Cube x={18} y={18} s={15} />
                  <RedX x={11} y={22} />
                </Ic>
              }
            />
            <Ribbon
              w="w-[80px]"
              label="移除實體圓角"
              icon={
                <Ic size={34}>
                  <Cube x={17} y={17} s={15} t="#4d84bd" l="#4d84bd" />
                  <RedX x={24} y={26} s={6} />
                </Ic>
              }
            />
            <Ribbon
              w="w-[52px]"
              label="尋找圓孔"
              icon={
                <Ic size={34}>
                  <Cube x={18} y={20} s={15} />
                  <ellipse cx="22" cy="15" rx="6" ry="3" fill="#6d9f8d" />
                  <circle cx="13" cy="8" r="6" fill="#cfe0e8" stroke="#222" strokeWidth="1.6" />
                  <path d="M8 13L1 20" stroke="#222" strokeWidth="2.4" />
                </Ic>
              }
            />
            <div className="ml-[1px] -mt-[5px]">
              <SmallItem text="移除歷程記錄" icon={<Tile><path d="M3 12L6 9V11H12V6H9L13 2L14 11Q14 13 11 13H6V15Z" fill="#d9532c" /><rect x="3" y="3" width="6" height="6" fill="#c9a063" /></Tile>} />
              <SmallItem text="新增歷程記錄" icon={<Tile><circle cx="10" cy="5" r="3" fill="#dde" stroke="#333" /><path d="M8 7L4 11" stroke="#333" strokeWidth="1.4" /><rect x="3" y="10" width="10" height="5" fill="#c9a063" /></Tile>} />
              <SmallItem text="簡化實體" arrow icon={<Tile><rect x="1" y="3" width="11" height="10" fill="#c9a063" /><rect x="4" y="5" width="3" height="6" fill="#3e6a9e" /><path d="M11 11L15 15" stroke="#c44ba0" strokeWidth="2" /></Tile>} />
            </div>
          </div>
          <div className="mt-auto pl-[215px] pb-[1px]">修改</div>
        </div>

        <div className="w-[265px] h-[92px] border-r border-[#dcdcdc] flex flex-col">
          <div className="flex pl-[2px] pt-[5px]">
            <Ribbon
              w="w-[58px]"
              label="分解實體"
              icon={
                <Ic size={36}>
                  <Cube x={18} y={7} s={7} {...BLUE} />
                  <Cube x={18} y={17} s={7} />
                  <Cube x={18} y={27} s={7} {...TEAL} />
                </Ic>
              }
            />
            <Ribbon
              w="w-[60px]"
              label="與平面對齊"
              icon={
                <Ic size={36}>
                  <polygon points="18,16 34,25 18,34 2,25" fill="#ececec" stroke="#bbb" />
                  <Cube x={18} y={7} s={6} />
                  <Cube x={18} y={17} s={6} />
                  <path d="M18 0V30" stroke="#222" strokeWidth="1" />
                </Ic>
              }
            />
            <Ribbon
              w="w-[48px]"
              label="對齊面"
              icon={
                <Ic size={36}>
                  <polygon points="18,12 34,22 18,32 2,22" fill="#a8a8a8" />
                  <polygon points="2,22 18,32 18,35 2,25" fill="#8a8a8a" />
                  <polygon points="34,22 18,32 18,35 34,25" fill="#777" />
                  <Cube x={18} y={9} s={8} />
                  <path d="M18 8V24M15 20L18 25L21 20" fill="none" stroke="#222" strokeWidth="1.2" />
                </Ic>
              }
            />
            <div className="w-[36px] flex flex-col items-center">
              <div className="h-[32px] flex items-center">
                <Ic size={36}>
                  <Cube x={15} y={14} s={7} />
                  <Cube x={15} y={26} s={7} />
                  <path d="M15 0V34M12 5L15 0L18 5" fill="none" stroke="#222" strokeWidth="1.2" />
                  <text x="20" y="11" fontSize="12" fontWeight="700" fill="#222" fontFamily="Liberation Sans, sans-serif">Z</text>
                </Ic>
              </div>
              <span className="whitespace-nowrap text-[11.8px] mt-px">對齊到</span>
              <span className="whitespace-nowrap text-[11.8px] mt-[2px]">Z 軸</span>
            </div>
            <Ribbon
              w="w-[58px]"
              label="實體定位"
              icon={
                <Ic size={36}>
                  <Cube x={24} y={11} s={10} {...BLUE} />
                  <Cube x={12} y={22} s={11} />
                  <path d="M20 32L31 21M24 20H32V28" fill="none" stroke="#111" strokeWidth="3" />
                </Ic>
              }
            />
          </div>
          <div className="mt-auto pl-[120px] pb-[1px]">設計</div>
        </div>

        <div className="w-[186px] h-[92px] border-r border-[#dcdcdc] flex flex-col">
          <div className="flex pl-[4px] pt-[5px]">
            <Ribbon
              w="w-[56px]"
              label="全部清除"
              icon={
                <Ic size={36}>
                  <Cube x={16} y={10} s={10} t="#dfe2e6" l="#eceef0" r="#c6cad0" />
                  <Cube x={16} y={22} s={10} t="#eceef0" l="#f4f5f6" r="#d6d9dd" />
                  <polygon points="27,18 32,24 27,30 22,24" fill="#e58ac0" />
                  <polygon points="22,24 27,30 22,36 17,30" fill="#5d8fc4" />
                </Ic>
              }
            />
            <div className="ml-[1px] -mt-[5px]">
              <SmallItem text="修改實體面顏色" icon={<Tile><Cube x={8} y={8} s={7} /><polygon points="8,8 14,5 14,12 8,15" fill="#c9397d" /></Tile>} />
              <SmallItem text="清除實體特徵顏色" icon={<Tile><Cube x={8} y={8} s={7} t="#dfe2e6" l="#eceef0" r="#c6cad0" /><rect x="10" y="9" width="4" height="4" fill="#e58ac0" /></Tile>} />
              <SmallItem text="設定特徵顏色" icon={<Tile><Cube x={8} y={8} s={7} t="#9c2b6a" l="#c9397d" r="#6e1c4a" /></Tile>} />
            </div>
          </div>
          <div className="mt-auto pl-[80px] pb-[1px]">顏色</div>
        </div>
      </div>

      <div className="flex h-[805px]">
        {/* left panel */}
        <div className="w-[578px] shrink-0 border-r border-[#e0e0e0] overflow-hidden">
          <div className="h-[34px] flex items-center pl-[2px]">
            <Tile><path d="M0 4H6L7 6H14L12 14H0Z" fill="#d9b26e" /><path d="M8 4C10 1 13 1 15 4" fill="none" stroke="#6d9f8d" strokeWidth="1.5" /></Tile>
            <span className="text-[6px] ml-[5px] text-[#555]">▼</span>
            <Tile className="ml-[7px]"><rect x="1" y="6" width="14" height="7" rx="1" fill="#666" /><rect x="4" y="1" width="8" height="5" fill="#fff" stroke="#555" /><rect x="4" y="10" width="8" height="5" fill="#fff" stroke="#555" /></Tile>
            <Tile className="ml-[8px]"><rect x="1" y="1" width="14" height="14" fill="#3a7ec2" /><rect x="4" y="1" width="7" height="5" fill="#fff" /><rect x="4" y="9" width="7" height="6" fill="#fff" /><path d="M8 13L14 5" stroke="#d9a52e" strokeWidth="2" /></Tile>
            <Tile className="ml-[8px]"><path d="M1 3H15V13H1Z" fill="#d9b26e" /><rect x="5" y="2" width="3" height="13" fill="#777" /></Tile>
            <span className="w-px h-[22px] bg-[#d0d0d0] ml-[7px]" />
            <Tile className="ml-[8px]"><path d="M3 6C6 1 14 3 13 10C13 12 12 13 11 14" fill="none" stroke="#8fb5de" strokeWidth="2" /><path d="M1 2V8H7Z" fill="#8fb5de" /></Tile>
            <Tile className="ml-[7px]"><path d="M13 6C10 1 2 3 3 10C3 12 4 13 5 14" fill="none" stroke="#b9cfe6" strokeWidth="2" /><path d="M15 2V8H9Z" fill="#b9cfe6" /></Tile>
            <span className="ml-[17px] text-[7px] text-[#666]">▼</span>
          </div>
          <div className="h-[42px] flex items-center -ml-px text-[18px] text-[#555] leading-none">路徑</div>

          <div className="h-[23px] flex items-center pl-[7px] gap-[5px] opacity-80">
            <Tile><Tool /><polygon points="8,5 15,10 8,15" fill="#8dbaa8" /></Tile>
            <Tile><Tool /><path d="M8 7L14 13M14 7L8 13" stroke="#f0a79a" strokeWidth="1.6" /></Tile>
            <Tile><Tool /><path d="M8 3H15M8 8H15M9 12H15" stroke="#f0a79a" strokeWidth="1.4" /></Tile>
            <span className="text-[6px] text-[#888]">▼</span>
            <Sep />
            <Tile><Waves /></Tile>
            <Tile><rect x="1" y="2" width="9" height="9" fill="#e8d0a8" /><rect x="6" y="7" width="9" height="8" fill="#fff" stroke="#6d9f8d" /></Tile>
            <span className="text-[6px] text-[#888]">▼</span>
            <Tile><Waves /><circle cx="12" cy="12" r="3" fill="#d9b26e" /></Tile>
            <span className="text-[#a9bdd2] w-[16px] text-[13px]">G1</span>
            <Tile><Tool /><path d="M8 12H14M12 9L15 12L12 15" fill="none" stroke="#f0a79a" strokeWidth="1.4" /></Tile>
            <Sep />
            <Tile><path d="M3 14L13 4" stroke="#f0a79a" strokeWidth="4" /><circle cx="4" cy="3" r="2" fill="#d9b26e" /></Tile>
            <Sep />
            <Tile><circle cx="8" cy="8" r="7" fill="#a9c4de" stroke="#7ea3c8" /><text x="8" y="12" textAnchor="middle" fontSize="11" fontWeight="700" fill="#fff" fontFamily="Liberation Sans, sans-serif">?</text></Tile>
          </div>
          <div className="h-[24px] flex items-center -ml-[4px] opacity-80">
            <Tile><path d="M4 15V6C4 1 12 1 12 6V15L10 13L8 15L6 13Z" fill="#ccc" /></Tile>
            <Sep className="ml-[9px]" />
            <Tile className="ml-[3px]"><polygon points="2,4 14,4 8,13" fill="#f0a79a" /></Tile>
            <Tile className="ml-[6px]"><polygon points="2,13 14,13 8,4" fill="#f0a79a" /></Tile>
            <Tile className="ml-[7px]"><path d="M2 3H13V8M2 3V13H11" fill="none" stroke="#f0a79a" strokeWidth="2" /><polygon points="10,9 15,12 10,15" fill="#f0a79a" /></Tile>
            <Tile className="ml-[5px]"><polygon points="3,6 13,6 8,1" fill="#f0a79a" /><polygon points="3,10 13,10 8,15" fill="#f0a79a" /><path d="M1 8H15" stroke="#f0a79a" /></Tile>
            <Sep className="ml-[7px]" />
            <span className="w-[20px] h-[20px] ml-px bg-[#c8d8ea] border border-[#b8cbe0] flex items-center justify-center">
              <svg width="16" height="16" viewBox="0 0 16 16"><path d="M1 6C5 1 9 9 13 4M1 10C4 6 6 11 9 10" fill="none" stroke="#7c97b5" /><path d="M8 6V15L10 13L12 16L13 15L11.5 12H14Z" fill="#333" /></svg>
            </span>
            <Tile className="ml-[4px]"><circle cx="6" cy="6" r="5" fill="none" stroke="#ccc" /><rect x="7" y="7" width="8" height="8" fill="#fff" stroke="#f0a79a" /></Tile>
            <span className="w-[33px] h-[20px] ml-[4px] border border-[#dcdcdc] flex items-center pl-[3px] gap-[3px]">
              <span className="w-[16px] h-[14px] border border-[#7ea3c8] bg-[#f4ead8]" />
              <span className="text-[6px] text-[#888]">▼</span>
            </span>
            <Sep className="ml-[5px]" />
            <Tile className="ml-[3px]"><rect x="1" y="1" width="10" height="4" fill="#bbb" /><rect x="4" y="5" width="4" height="6" fill="#bbb" /><path d="M0 15H15" stroke="#7ea3c8" strokeWidth="2" /><Tool /></Tile>
            <Tile className="ml-[6px]"><circle cx="5" cy="6" r="5" fill="#bbb" /><path d="M5 14L14 3" stroke="#e0bb6a" strokeWidth="2.4" /></Tile>
          </div>
          <div className="h-[7px] border-b border-[#d0d0d0]" />

          <div className="relative pt-[1px] whitespace-nowrap">
            <span className="absolute left-[2px] top-[20px] h-[167px] border-l border-dotted border-[#444]" />
            <span className="absolute left-[21px] top-[112px] h-[56px] border-l border-dotted border-[#444]" />
            <div className="h-4 flex items-center -ml-[4px]">機器群組<L>-1</L></div>
            <div className="h-4 flex items-center gap-[6px]">
              <svg width="9" height="14" viewBox="0 0 9 14"><rect width="8" height="13" x="0.5" y="0.5" fill="#eef2f6" stroke="#b8c8d8" /><path d="M2 4H7M2 7H7M2 10H7" stroke="#b8c8d8" /></svg>
              <span>屬性<L> - Mill Default MM</L></span>
            </div>
            <div className="h-4 flex items-center pl-[3px] gap-[1px]">
              <Dots w="w-[10px]" />
              <Tile><rect y="2" width="15" height="12" fill="#f4e3c4" /><rect y="1" width="7" height="3" fill="#dcc79c" /></Tile>
              <span className="ml-[4px]">檔案</span>
            </div>
            <div className="h-4 flex items-center pl-[3px] gap-[1px]">
              <Dots w="w-[10px]" />
              <Tile><Tool /><circle cx="11" cy="12" r="3" fill="#e3c998" /></Tile>
              <span className="ml-[4px]">刀具設定</span>
            </div>
            <div className="h-4 flex items-center pl-[3px] gap-[1px]">
              <Dots w="w-[10px]" />
              <Tile><Cube x={8} y={7} s={7} t="#f3c3b6" l="#f6d3c9" r="#e9a897" /></Tile>
              <span className="ml-[4px]">素材設定</span>
            </div>
            <div className="h-4 flex items-center gap-[6px]">
              <svg width="9" height="14" viewBox="0 0 9 14"><rect y="1" width="4" height="5" fill="#a9c4de" /><rect x="5" y="1" width="4" height="5" fill="#a9c4de" /><rect y="8" width="4" height="5" fill="#a9c4de" /><rect x="5" y="8" width="4" height="5" fill="#a9c4de" /></svg>
              <span>刀具群組<L>-1</L></span>
            </div>
            <div className="h-4 flex items-center">
              <span className="w-[7px] h-[9px] border border-l-0 border-[#999] flex items-center"><span className="w-[4px] h-px bg-[#333]" /></span>
              <Dots w="w-[6px]" />
              <Tile><path d="M0 3H6L7 5H15L13 15H0Z" fill="#f0dfc0" stroke="#c8b48c" strokeWidth="0.5" /><path d="M7 11L10 14L15 7" fill="none" stroke="#2c6fb8" strokeWidth="2" /></Tile>
              <span className="ml-[6px]"><L>1 - </L>整合漸變<L> - [WCS: </L>俯視圖<L>] - [</L>刀具面<L>: </L>俯視圖<L>] - [</L>構圖平面<L>: </L>俯視圖<L>]</L></span>
            </div>
            <div className="h-4 flex items-center pl-[22px]">
              <Dots w="w-[10px]" />
              <Tile><path d="M0 3H16M0 8H16M0 13H16" stroke="#c5cdd6" /><circle cx="5" cy="3" r="2" fill="#fff" stroke="#a9bdd2" /><circle cx="11" cy="8" r="2" fill="#fff" stroke="#a9bdd2" /><circle cx="6" cy="13" r="2" fill="#fff" stroke="#a9bdd2" /></Tile>
              <span className="ml-[5px]">參數</span>
            </div>
            <div className="h-4 flex items-center pl-[22px]">
              <Dots w="w-[10px]" />
              <Tile><rect x="4" y="1" width="8" height="3" fill="#b5b5b5" /><rect x="7" y="4" width="2" height="11" fill="#dcc06e" /></Tile>
              <span className="ml-[5px]"><L>#2 - M35.00 </L>槽銑刀<L> - 35 SLOTTING TOOL OR SAW</L></span>
            </div>
            <div className="h-4 flex items-center pl-[22px]">
              <Dots w="w-[10px]" />
              <Tile><Cube x={8} y={8} s={7} t="#9fc0de" l="#cfe0ef" r="#7ea3c8" /></Tile>
              <span className="ml-[5px]">圖形</span>
            </div>
            <div className="h-4 flex items-center pl-[22px]">
              <Dots w="w-[10px]" />
              <Tile><Waves /></Tile>
              <span className="ml-[5px]">刀具路徑<L> - 376.5K - </L>小腔体<L>.NC - </L>程式號碼<L> 0</L></span>
            </div>
            <div className="h-4 flex items-center pl-[3px]">
              <Dots w="w-[12px]" />
              <svg width="10" height="11" viewBox="0 0 10 11" className="ml-[2px]"><polygon points="0,0 10,5.5 0,11" fill="#efa090" /></svg>
            </div>
          </div>
        </div>

        <div className="flex-1 pt-[39px]">
          <Viewport />
        </div>
      </div>

      <MultiAxisDialog />

      {/* hand drawn marking */}
      <svg width="1748" height="923" viewBox="0 0 1748 923" className="absolute inset-0 pointer-events-none">
        <path
          d="M713 487C712 474 725 466 738 465C765 464 780 468 796 470C880 473 960 473 1022 472C1035 470 1045 466 1058 466C1070 466 1082 468 1090 472C1104 478 1112 486 1112 494C1112 502 1108 508 1100 512C1094 515 1094 516 1090 517C1080 520 1072 524 1062 528C1000 530 940 530 884 528C860 524 835 525 811 523C795 520 775 516 760 515C750 512 745 512 734 508C722 502 714 495 713 487Z"
          fill="none"
          stroke="#c40058"
          strokeWidth="3"
        />
      </svg>
    </div>
  );
}
